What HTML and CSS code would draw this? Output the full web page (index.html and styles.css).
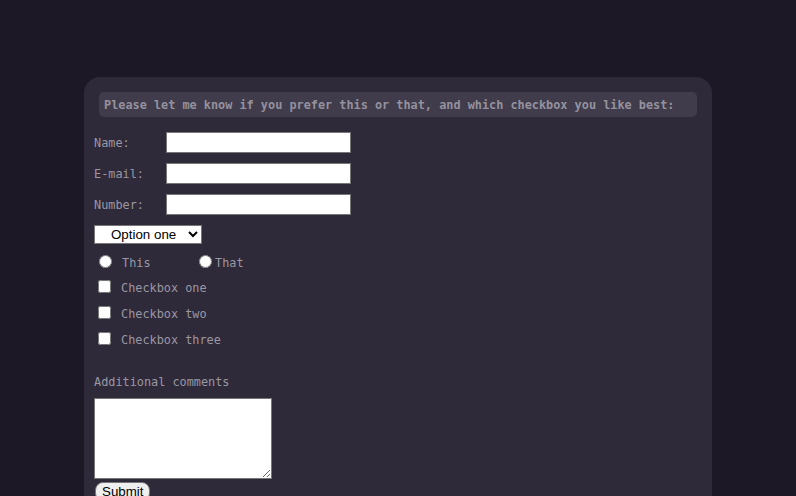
FILE: index.html
```html
<!DOCTYPE html>
<html>
<head>
<meta charset="utf-8">
<link rel="stylesheet" href="styles.css">
</head>
<body>
<main class="card">
  <p class="intro">Please let me know if you prefer this or that, and which checkbox you like best:</p>
  <form class="form">
    <div class="field"><label class="lbl" for="n">Name:</label><input class="txt" id="n" type="text"></div>
    <div class="field"><label class="lbl" for="e">E-mail:</label><input class="txt" id="e" type="text"></div>
    <div class="field"><label class="lbl" for="u">Number:</label><input class="txt" id="u" type="text"></div>
    <select class="sel"><option>Option one</option><option>Option two</option></select>
    <div class="radios">
      <label class="radio r1"><input type="radio" name="r"><span class="rtext">This</span></label>
      <label class="radio r2"><input type="radio" name="r"><span class="rtext tight">That</span></label>
    </div>
    <label class="check"><input type="checkbox"><span class="ctext">Checkbox one</span></label>
    <label class="check"><input type="checkbox"><span class="ctext">Checkbox two</span></label>
    <label class="check"><input type="checkbox"><span class="ctext">Checkbox three</span></label>
    <label class="comments" for="c">Additional comments</label>
    <textarea class="area" id="c"></textarea>
    <button class="submit" type="button">Submit</button>
  </form>
</main>
</body>
</html>
```
FILE: styles.css
```css
html, body { margin: 0; padding: 0; }
body {
  background: #1c1826;
  width: 796px;
  height: 496px;
  overflow: hidden;
  font-family: "DejaVu Sans Mono", "Liberation Mono", monospace;
  color: #9a97a3;
}
.card {
  margin: 77px 0 0 84px;
  width: 628px;
  height: 480px;
  box-sizing: border-box;
  background: #2f2a39;
  border-radius: 16px;
  padding: 15px 15px 0 10px;
}
.intro {
  margin: 0 0 0 5px;
  height: 25px;
  background: #413c4b;
  border-radius: 5px;
  box-sizing: border-box;
  padding: 6px 0 0 5px;
  font-size: 11.85px;
  font-weight: bold;
  line-height: 15px;
  color: #94919e;
}
.form {
  display: flex;
  flex-direction: column;
  align-items: flex-start;
  padding-top: 15px;
}
.field {
  display: flex;
  align-items: center;
  height: 21px;
  margin-bottom: 10px;
}
.lbl {
  width: 72px;
  font-size: 11.85px;
}
.txt {
  width: 185px;
  height: 21px;
  box-sizing: border-box;
  border: 1px solid #767676;
  background: #fff;
  margin: 0;
  padding: 1px 2px;
}
.sel {
  margin: 0;
  width: 108px;
  height: 19px;
  font-family: "Liberation Sans", Arial, sans-serif;
  font-size: 13.33px;
  color: #000;
  background: #fff;
  border: 1px solid #767676;
  border-radius: 0;
  padding: 0 0 0 12px;
}
.radios {
  display: flex;
  align-items: flex-start;
  margin-top: 10px;
  height: 18px;
}
.radio {
  display: flex;
  align-items: flex-start;
  font-size: 11.85px;
  line-height: 15px;
}
.radio input { margin: 1px 0 0 5px; width: 13px; height: 13px; }
.r1 { width: 100px; }
.rtext { margin-left: 10px; padding-top: 2px; }
.rtext.tight { margin-left: 3px; }
.check {
  display: flex;
  align-items: center;
  height: 13px;
  margin-top: 13px;
  font-size: 11.85px;
}
.radios + .check { margin-top: 8px; }
.check input { margin: 0 0 0 4px; width: 13px; height: 13px; }
.ctext { margin-left: 10px; padding-top: 2px; }
.comments {
  margin-top: 30px;
  font-size: 11.85px;
  line-height: 15px;
}
.area {
  margin: 8px 0 0 0;
  width: 178px;
  height: 81px;
  box-sizing: border-box;
  border: 1px solid #767676;
  background: #fff;
}
.submit {
  margin: 3px 0 0 1px;
  font-family: "Liberation Sans", Arial, sans-serif;
  font-size: 13.33px;
  padding: 1px 6px;
  background: #efefef;
  border: 1px solid #767676;
  border-radius: 8px;
  color: #000;
}
```
